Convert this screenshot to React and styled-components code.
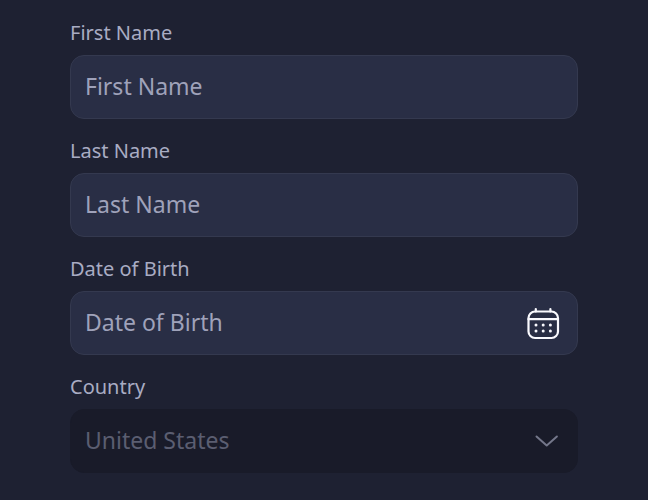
import React from 'react';
import styled, { createGlobalStyle, css } from 'styled-components';

const GlobalStyle = createGlobalStyle`
  * { box-sizing: border-box; }
  body {
    margin: 0;
    background: #1e2132;
    font-family: 'Noto Sans', 'Open Sans', sans-serif;
  }
`;

const Form = styled.form`
  display: flex;
  flex-direction: column;
  gap: 18px;
  padding: 19px 70px 26px;
`;

const Field = styled.div`
  display: flex;
  flex-direction: column;
  gap: 8px;
`;

const Label = styled.label`
  color: #a9acc3;
  font-size: 20px;
  line-height: 28px;
`;

const Control = styled.div`
  display: flex;
  align-items: center;
  height: 64px;
  padding: 0 17px 0 14px;
  border: 1px solid ${(p) => (p.$disabled ? '#191b29' : '#34394f')};
  border-radius: 14px;
  background: ${(p) => (p.$disabled ? '#191b29' : '#292e45')};
`;

const controlText = css`
  flex: 1;
  min-width: 0;
  height: 100%;
  padding: 0 0 2px;
  border: 0;
  outline: 0;
  background: transparent;
  font-family: inherit;
  font-size: 23px;
`;

const Input = styled.input`
  ${controlText}
  color: #d5d8ea;
  &::placeholder { color: #9fa2ba; opacity: 1; }
`;

const Select = styled.select`
  ${controlText}
  appearance: none;
  color: #5b5e71;
  opacity: 1;
`;

const IconButton = styled.button`
  display: flex;
  padding: 0;
  border: 0;
  background: transparent;
  color: #fafaff;
`;

const Chevron = styled.svg`
  color: #74778a;
  pointer-events: none;
`;

function CalendarIcon() {
  return (
    <svg width="34" height="34" viewBox="0 0 34 34" fill="none" stroke="currentColor" strokeWidth="2.2" strokeLinecap="round">
      <rect x="2.5" y="5.5" width="29.5" height="26.5" rx="6.5" />
      <path d="M2.5 13.2h29.5M9.8 3v2.5M24.4 3v2.5" />
      <g fill="currentColor" stroke="none">
        <circle cx="10" cy="19" r="1.5" />
        <circle cx="17.2" cy="19" r="1.5" />
        <circle cx="24.4" cy="19" r="1.5" />
        <circle cx="10" cy="25" r="1.5" />
        <circle cx="17.2" cy="25" r="1.5" />
        <circle cx="24.4" cy="25" r="1.5" />
      </g>
    </svg>
  );
}

function ChevronIcon() {
  return (
    <Chevron width="26" height="14" viewBox="0 0 26 14" fill="none" stroke="currentColor" strokeWidth="2" strokeLinecap="round" strokeLinejoin="round" aria-hidden="true">
      <path d="M2.5 2.5l10.2 9 10.2-9" />
    </Chevron>
  );
}

export default function App() {
  return (
    <>
      <GlobalStyle />
      <Form>
        <Field>
          <Label htmlFor="first">First Name</Label>
          <Control><Input id="first" placeholder="First Name" /></Control>
        </Field>
        <Field>
          <Label htmlFor="last">Last Name</Label>
          <Control><Input id="last" placeholder="Last Name" /></Control>
        </Field>
        <Field>
          <Label htmlFor="birth">Date of Birth</Label>
          <Control>
            <Input id="birth" placeholder="Date of Birth" />
            <IconButton type="button" aria-label="Open calendar"><CalendarIcon /></IconButton>
          </Control>
        </Field>
        <Field>
          <Label htmlFor="country">Country</Label>
          <Control $disabled>
            <Select id="country" disabled><option>United States</option></Select>
            <ChevronIcon />
          </Control>
        </Field>
      </Form>
    </>
  );
}
